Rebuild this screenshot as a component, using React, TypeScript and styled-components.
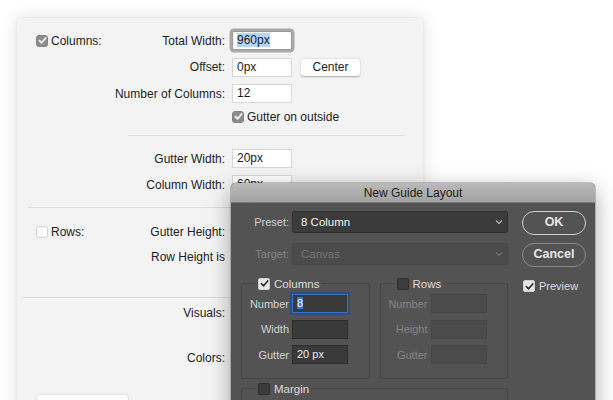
import React from 'react';
import styled, { createGlobalStyle, css } from 'styled-components';

const GlobalStyle = createGlobalStyle`
  html, body {
    margin: 0;
    padding: 0;
    background: #ffffff;
  }
  body {
    font-family: "Liberation Sans", Arial, sans-serif;
  }
`;

const Check = ({ color }: { color: string }) => (
    <svg width="9" height="9" viewBox="0 0 10 10">
        <polyline points="1.6,5.2 4,7.6 8.6,2.2" fill="none" stroke={color} strokeWidth="1.8" strokeLinecap="round" strokeLinejoin="round" />
    </svg>
);

const Chevron = () => (
    <svg width="8" height="6" viewBox="0 0 8 6">
        <polyline points="1,1.5 4,4.5 7,1.5" fill="none" stroke="#b8b8b8" strokeWidth="1.2" />
    </svg>
);

export default function App() {
    return (
        <Desk>
            <GlobalStyle />
            <LightPanel>
                <Section $gap={7.5} $mt={0} $rows="19px 19px 19px 12px">
                    <Title><LightBox $on><Check color="#fff" /></LightBox>Columns:</Title>
                    <Label>Total Width:</Label>
                    <Field><TextField $focus><Selected>960px</Selected></TextField></Field>
                    <Label>Offset:</Label>
                    <Field><TextField>0px</TextField><LightButton>Center</LightButton></Field>
                    <Label>Number of Columns:</Label>
                    <Field><TextField>12</TextField></Field>
                    <Field><CheckRow><LightBox $on><Check color="#fff" /></LightBox>Gutter on outside</CheckRow></Field>
                </Section>
                <Rule $left={111} $mt={12.5} />
                <Section $gap={7} $mt={13}>
                    <Label>Gutter Width:</Label>
                    <Field><TextField>20px</TextField></Field>
                    <Label>Column Width:</Label>
                    <Field><TextField>60px</TextField></Field>
                </Section>
                <Rule $left={11} $mt={13} />
                <Section $gap={6} $mt={14}>
                    <Title><LightBox />Rows:</Title>
                    <Label>Gutter Height:</Label>
                    <Field />
                    <Label>Row Height is</Label>
                    <Field />
                </Section>
                <Rule $left={6} $mt={31} />
                <Section $gap={26.5} $mt={5}>
                    <Label>Visuals:</Label>
                    <Field />
                    <Label>Colors:</Label>
                    <Field />
                </Section>
                <WideButton />
            </LightPanel>

            <Dialog>
                <TitleBar>New Guide Layout</TitleBar>
                <DialogBody>
                    <MainColumn>
                        <FormRow>
                            <DarkLabel>Preset:</DarkLabel>
                            <Select>8 Column<Chevron /></Select>
                        </FormRow>
                        <FormRow $mt={10}>
                            <DarkLabel $off>Target:</DarkLabel>
                            <Select $off>Canvas<Chevron /></Select>
                        </FormRow>
                        <Groups>
                            <Group>
                                <Legend><DarkBox $on><Check color="#2a2a2a" /></DarkBox>Columns</Legend>
                                <FieldGrid>
                                    <DarkLabel>Number</DarkLabel>
                                    <DarkInput $focus><DarkSelected>8</DarkSelected></DarkInput>
                                    <DarkLabel>Width</DarkLabel>
                                    <DarkInput />
                                    <DarkLabel>Gutter</DarkLabel>
                                    <DarkInput>20 px</DarkInput>
                                </FieldGrid>
                            </Group>
                            <Group>
                                <Legend><DarkBox />Rows</Legend>
                                <FieldGrid>
                                    <DarkLabel $off>Number</DarkLabel>
                                    <DarkInput $off />
                                    <DarkLabel $off>Height</DarkLabel>
                                    <DarkInput $off />
                                    <DarkLabel $off>Gutter</DarkLabel>
                                    <DarkInput $off />
                                </FieldGrid>
                            </Group>
                        </Groups>
                        <MarginGroup>
                            <Legend><DarkBox />Margin</Legend>
                            <FieldGrid />
                        </MarginGroup>
                    </MainColumn>
                    <SideColumn>
                        <PillButton $primary>OK</PillButton>
                        <PillButton>Cancel</PillButton>
                        <PreviewRow><DarkBox $on><Check color="#2a2a2a" /></DarkBox>Preview</PreviewRow>
                    </SideColumn>
                </DialogBody>
            </Dialog>
        </Desk>
    );
}

// light panel (behind)

const Desk = styled.div`
    position: relative;
    width: 613px;
    height: 400px;
    overflow: hidden;
    background: #ffffff;
`;

const LightPanel = styled.div`
    position: absolute;
    left: 17px;
    top: 18px;
    width: 406px;
    height: 430px;
    box-sizing: border-box;
    padding-top: 13px;
    background: #f3f3f3;
    box-shadow: 0 0 16px rgba(0, 0, 0, 0.13), 0 0 2px rgba(0, 0, 0, 0.08);
    color: #222222;
    font-size: 12px;
`;

const Section = styled.div<{ $gap: number; $mt: number; $rows?: string }>`
    display: grid;
    grid-template-columns: 76px 120px auto;
    ${p => p.$rows && css`grid-template-rows: ${p.$rows};`}
    grid-auto-rows: 19px;
    row-gap: ${p => p.$gap}px;
    margin-top: ${p => p.$mt}px;
    padding-left: 19px;
    align-items: center;
`;

const Title = styled.div`
    grid-column: 1;
    display: flex;
    align-items: center;
    gap: 3px;
`;

const Label = styled.div`
    grid-column: 2;
    text-align: right;
    padding-right: 7px;
    white-space: nowrap;
`;

const Field = styled.div`
    grid-column: 3;
    display: flex;
    align-items: center;
    gap: 9px;
`;

const TextField = styled.div<{ $focus?: boolean }>`
    width: 60px;
    height: 19px;
    box-sizing: border-box;
    padding: 0 4px;
    background: #ffffff;
    border: 1px solid #d6d6d6;
    line-height: 17px;
    color: #1a1a1a;
    ${p => p.$focus && css`
        border-color: #9a9a9a;
        border-radius: 2px;
        box-shadow: 0 0 0 2.5px #a9a9a9;
    `}
`;

const Selected = styled.span`
    background: #b5d5fb;
`;

const LightButton = styled.div`
    width: 59px;
    height: 17px;
    line-height: 17px;
    text-align: center;
    background: #ffffff;
    border-radius: 3px;
    box-shadow: 0 0.5px 1.5px rgba(0, 0, 0, 0.3);
`;

const CheckRow = styled.div`
    display: flex;
    align-items: center;
    gap: 3px;
`;

const LightBox = styled.span<{ $on?: boolean }>`
    display: inline-flex;
    align-items: center;
    justify-content: center;
    width: 12px;
    height: 12px;
    box-sizing: border-box;
    border-radius: 3px;
    background: ${p => (p.$on ? '#8d8d8d' : '#ffffff')};
    border: 1px solid ${p => (p.$on ? '#828282' : '#cfcfcf')};
`;

const Rule = styled.div<{ $left: number; $mt: number }>`
    height: 1px;
    margin: ${p => p.$mt}px 18px 0 ${p => p.$left}px;
    background: #dcdcdc;
`;

const WideButton = styled.div`
    width: 91px;
    height: 20px;
    margin: 27px 0 0 20px;
    background: #ffffff;
    border-radius: 3px;
    box-shadow: 0 0.5px 1.5px rgba(0, 0, 0, 0.3);
`;

// dark dialog (front)

const Dialog = styled.div`
    position: absolute;
    left: 231px;
    top: 183px;
    width: 364px;
    height: 240px;
    overflow: hidden;
    background: #535353;
    border-radius: 5px 5px 0 0;
    box-shadow: 0 6px 22px rgba(0, 0, 0, 0.35), 0 0 0 1px rgba(0, 0, 0, 0.18);
    color: #d4d4d4;
    font-size: 11px;
`;

const TitleBar = styled.div`
    height: 19px;
    line-height: 20px;
    text-align: center;
    font-size: 12px;
    color: #1d1d1d;
    background: linear-gradient(#bababa, #a2a2a2);
    border-bottom: 1px solid #7a7a7a;
`;

const DialogBody = styled.div`
    display: flex;
    padding: 8px 9px 0 10px;
`;

const MainColumn = styled.div`
    width: 267px;
`;

const SideColumn = styled.div`
    width: 64px;
    margin-left: 14px;
    display: flex;
    flex-direction: column;
    gap: 8px;
`;

const FormRow = styled.div<{ $mt?: number }>`
    display: grid;
    grid-template-columns: 48px 216px;
    column-gap: 3px;
    height: 22px;
    align-items: center;
    margin-top: ${p => p.$mt ?? 0}px;
`;

const DarkLabel = styled.div<{ $off?: boolean }>`
    text-align: right;
    white-space: nowrap;
    color: ${p => (p.$off ? '#858585' : '#d2d2d2')};
`;

const Select = styled.div<{ $off?: boolean }>`
    height: 22px;
    box-sizing: border-box;
    display: flex;
    align-items: center;
    justify-content: space-between;
    padding: 0 4px 0 8px;
    border-radius: 2px;
    font-size: 11.5px;
    background: ${p => (p.$off ? '#4b4b4b' : '#3b3b3b')};
    border: 1px solid ${p => (p.$off ? '#474747' : '#303030')};
    color: ${p => (p.$off ? '#767676' : '#f0f0f0')};
    svg { opacity: ${p => (p.$off ? 0.35 : 1)}; }
`;

const Groups = styled.div`
    display: flex;
    gap: 10px;
    margin-top: 12px;
`;

const Group = styled.fieldset`
    flex: 1;
    min-width: 0;
    margin: 0;
    padding: 4px 0 14px 0;
    border: 1px solid #454545;
    border-radius: 2px;
`;

const MarginGroup = styled(Group)`
    margin-top: 3px;
    padding-bottom: 40px;
`;

const Legend = styled.legend`
    display: flex;
    align-items: center;
    gap: 4px;
    margin-left: 14px;
    padding: 0 2px;
    height: 13px;
    color: #dcdcdc;
    font-size: 11.5px;
`;

const FieldGrid = styled.div`
    display: grid;
    grid-template-columns: 47px 56px;
    column-gap: 3px;
    grid-auto-rows: 19px;
    row-gap: 6.5px;
    align-items: center;
`;

const DarkInput = styled.div<{ $focus?: boolean; $off?: boolean }>`
    height: 19px;
    box-sizing: border-box;
    padding: 0 4px;
    line-height: 17px;
    color: #ececec;
    background: ${p => (p.$off ? '#4b4b4b' : '#3a3a3a')};
    border: 1px solid ${p => (p.$off ? '#464646' : '#2c2c2c')};
    ${p => p.$focus && css`
        border-color: #3a73c4;
        box-shadow: 0 0 0 2px #2b4f7c;
    `}
`;

const DarkSelected = styled.span`
    background: #3a75d6;
    color: #ffffff;
`;

const DarkBox = styled.span<{ $on?: boolean }>`
    display: inline-flex;
    align-items: center;
    justify-content: center;
    width: 12px;
    height: 12px;
    box-sizing: border-box;
    border-radius: 2px;
    background: ${p => (p.$on ? '#e6e6e6' : '#3c3c3c')};
    border: 1px solid ${p => (p.$on ? '#cfcfcf' : '#2b2b2b')};
`;

const PillButton = styled.div<{ $primary?: boolean }>`
    height: 24px;
    box-sizing: border-box;
    border-radius: 12px;
    border: 1.5px solid ${p => (p.$primary ? '#d0d0d0' : '#8b8b8b')};
    line-height: 21px;
    text-align: center;
    font-size: 12.5px;
    font-weight: bold;
    color: #e6e6e6;
`;

const PreviewRow = styled.div`
    display: flex;
    align-items: center;
    gap: 4px;
    margin-top: 5px;
    padding-left: 1px;
    color: #dcdcdc;
`;
